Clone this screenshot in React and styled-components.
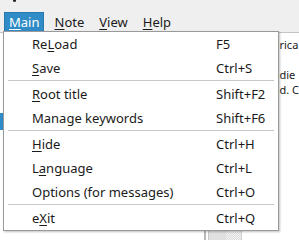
import React from 'react';
import styled, { createGlobalStyle } from 'styled-components';

const GlobalStyle = createGlobalStyle`
  html, body {
    margin: 0;
    padding: 0;
    background: #ffffff;
  }
  body {
    font-family: "Noto Sans", "DejaVu Sans", sans-serif;
    font-size: 13px;
    color: #1a1a1a;
  }
`;

const menuBar = [
  { label: 'Main', key: 0, open: true },
  { label: 'Note', key: 0 },
  { label: 'View', key: 0 },
  { label: 'Help', key: 0 },
];

const items = [
  { label: 'ReLoad', key: 2, shortcut: 'F5' },
  { label: 'Save', key: 0, shortcut: 'Ctrl+S' },
  { sep: true },
  { label: 'Root title', key: 0, shortcut: 'Shift+F2' },
  { label: 'Manage keywords', key: -1, shortcut: 'Shift+F6' },
  { sep: true },
  { label: 'Hide', key: 0, shortcut: 'Ctrl+H' },
  { label: 'Language', key: 1, shortcut: 'Ctrl+L' },
  { label: 'Options (for messages)', key: -1, shortcut: 'Ctrl+O' },
  { sep: true },
  { label: 'eXit', key: 1, shortcut: 'Ctrl+Q' },
];

const Mnemonic = ({ text, index }) => {
  if (index < 0) return text;
  return (
    <>
      {text.slice(0, index)}
      <Under>{text[index]}</Under>
      {text.slice(index + 1)}
    </>
  );
};

export default function App() {
  return (
    <Screen>
      <GlobalStyle />
      <TopStrip>
        <Dot />
      </TopStrip>
      <MenuBar>
        {menuBar.map((m) => (
          <BarItem key={m.label} $open={m.open}>
            <Mnemonic text={m.label} index={m.key} />
          </BarItem>
        ))}
      </MenuBar>
      <Workspace>
        <TreePane>
          <TreeRow $selected />
        </TreePane>
        <Splitter>
          <Grip />
          <Checker />
        </Splitter>
        <TextPane>
          <Line>rica</Line>
          <Line>&nbsp;</Line>
          <Line>die</Line>
          <Line>d. C</Line>
        </TextPane>
      </Workspace>
      <Dropdown>
        {items.map((it, i) =>
          it.sep ? (
            <Separator key={i} />
          ) : (
            <Item key={it.label}>
              <span>
                <Mnemonic text={it.label} index={it.key} />
              </span>
              <Shortcut>{it.shortcut}</Shortcut>
            </Item>
          )
        )}
      </Dropdown>
    </Screen>
  );
}

const Screen = styled.div`
  position: relative;
  width: 299px;
  height: 240px;
  overflow: hidden;
  background: #ffffff;
`;

const TopStrip = styled.div`
  height: 10px;
  background: #efefef;
  position: relative;
`;

const Dot = styled.span`
  position: absolute;
  left: 13px;
  top: -1px;
  width: 3px;
  height: 3px;
  border-radius: 50%;
  background: #222;
`;

const MenuBar = styled.div`
  display: flex;
  align-items: center;
  gap: 5px;
  height: 21px;
  padding: 1px 0 0 4px;
  background: #efefef;
  border-bottom: 1px solid #c4c4c4;
`;

const BarItem = styled.div`
  height: 18px;
  line-height: 18px;
  padding: 0 4px;
  color: ${(p) => (p.$open ? '#ffffff' : '#1a1a1a')};
  background: ${(p) => (p.$open ? '#308cc6' : 'transparent')};
  border: 1px solid ${(p) => (p.$open ? '#2a78ab' : 'transparent')};
`;

const Under = styled.span`
  text-decoration: underline;
  text-underline-offset: 2px;
`;

const Workspace = styled.div`
  display: flex;
  height: 207px;
`;

const TreePane = styled.div`
  width: 209px;
  padding-top: 80px;
`;

const TreeRow = styled.div`
  height: 17px;
  width: 100%;
  background: ${(p) => (p.$selected ? '#308cc6' : 'transparent')};
`;

const Splitter = styled.div`
  display: flex;
  align-items: flex-end;
  width: 36px;
  border-left: 2px solid #b8b8b8;
  border-right: 1px solid #d0d0d0;
`;

const Grip = styled.div`
  width: 17px;
  height: 12px;
  margin-left: 2px;
  background: #e0e0e0;
  border-left: 1px solid #c8c8c8;
`;

const Checker = styled.div`
  width: 15px;
  height: 12px;
  background-color: #f4f4f4;
  background-image: repeating-conic-gradient(#dcdcdc 0 25%, transparent 0 50%);
  background-size: 2px 2px;
`;

const TextPane = styled.div`
  flex: 1;
  padding: 4px 0 0 37px;
  display: flex;
  flex-direction: column;
  font-size: 11px;
  line-height: 15px;
`;

const Line = styled.div`
  white-space: nowrap;
  color: #1a1a1a;
`;

const Dropdown = styled.div`
  position: absolute;
  left: 3px;
  top: 31px;
  width: 274px;
  background: #ffffff;
  border: 1px solid #9a9a9a;
  box-shadow: 1px 1px 2px rgba(0, 0, 0, 0.25);
`;

const Item = styled.div`
  display: grid;
  grid-template-columns: 184px 1fr;
  align-items: center;
  height: 24px;
  padding-left: 28px;
  white-space: nowrap;
  color: #1a1a1a;
`;

const Shortcut = styled.span`
  color: #1a1a1a;
`;

const Separator = styled.div`
  height: 1px;
  margin: 0 4px 1px;
  background: #c8c8c8;
`;
